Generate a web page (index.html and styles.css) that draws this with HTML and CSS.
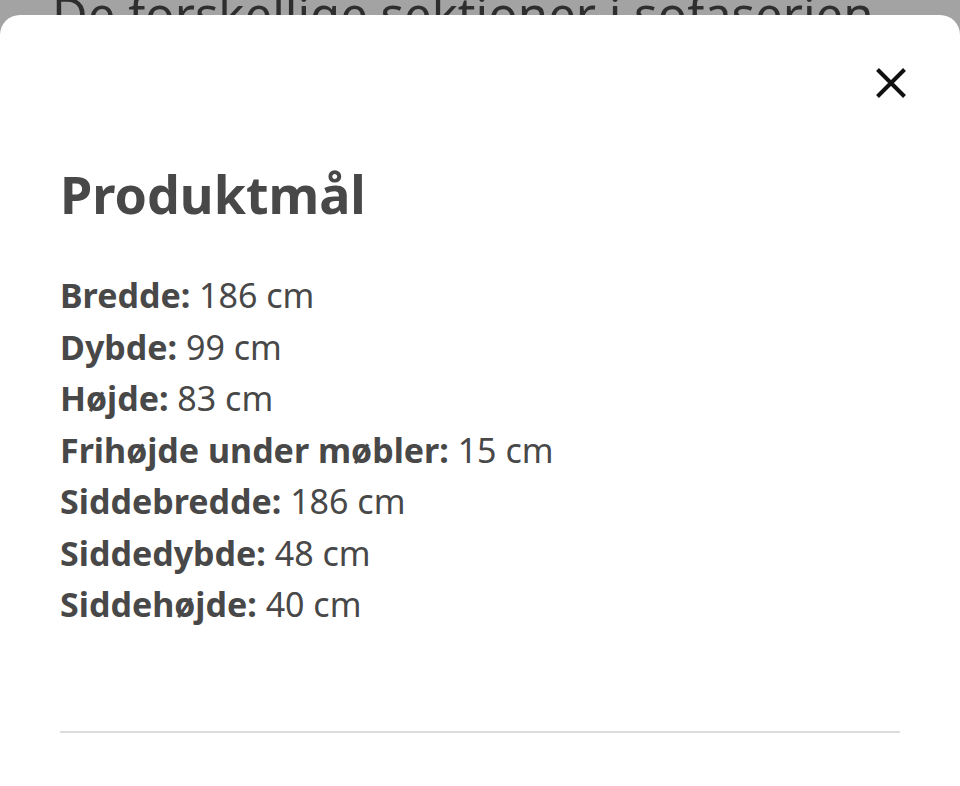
FILE: index.html
```html
<!DOCTYPE html>
<html lang="da">
<head>
<meta charset="utf-8">
<title>Produktmål</title>
<link rel="stylesheet" href="styles.css">
</head>
<body>
<div class="page">
  <p class="behind">De forskellige sektioner i sofaserien</p>
  <div class="sheet" role="dialog" aria-label="Produktmål">
    <div class="sheet-top">
      <button class="close" aria-label="Luk">
        <svg width="34" height="34" viewBox="0 0 34 34"><path d="M3.5 3.5 L30.5 30.5 M30.5 3.5 L3.5 30.5" stroke="#111" stroke-width="4" fill="none"/></svg>
      </button>
    </div>
    <h1 class="title">Produktmål</h1>
    <ul class="dims">
      <li><b>Bredde:</b> 186 cm</li>
      <li><b>Dybde:</b> 99 cm</li>
      <li><b>Højde:</b> 83 cm</li>
      <li><b>Frihøjde under møbler:</b> 15 cm</li>
      <li><b>Siddebredde:</b> 186 cm</li>
      <li><b>Siddedybde:</b> 48 cm</li>
      <li><b>Siddehøjde:</b> 40 cm</li>
    </ul>
    <hr class="divider">
  </div>
</div>
</body>
</html>
```

FILE: styles.css
```css
html, body {
  margin: 0;
  padding: 0;
}
body {
  background: #a3a3a3;
  font-family: "Noto Sans", "Open Sans", sans-serif;
  color: #484848;
}
.page {
  position: relative;
  width: 960px;
  height: 786px;
  overflow: hidden;
}
.behind {
  margin: 0;
  padding-left: 52px;
  font-size: 49px;
  line-height: 40px;
  margin-top: -6px;
  color: #2e2e2e;
  white-space: nowrap;
}
.sheet {
  position: absolute;
  top: 15px;
  left: 0;
  right: 0;
  bottom: 0;
  background: #fff;
  border-radius: 20px 20px 0 0;
  padding: 0 60px;
}
.sheet-top {
  display: flex;
  justify-content: flex-end;
  padding-top: 51px;
  height: 34px;
  margin-right: -8px;
}
.close {
  border: 0;
  background: none;
  padding: 0;
  width: 34px;
  height: 34px;
  cursor: pointer;
}
.close svg {
  display: block;
}
.title {
  margin: 62px 0 0;
  font-size: 52px;
  font-weight: 700;
  line-height: 64px;
  color: #484848;
}
.dims {
  list-style: none;
  margin: 44px 0 0;
  padding: 0;
  font-size: 34px;
  line-height: 51.5px;
}
.dims b {
  font-weight: 700;
}
.divider {
  border: 0;
  height: 2px;
  background: #dcdcdc;
  margin: 100px 0 0;
}
```
